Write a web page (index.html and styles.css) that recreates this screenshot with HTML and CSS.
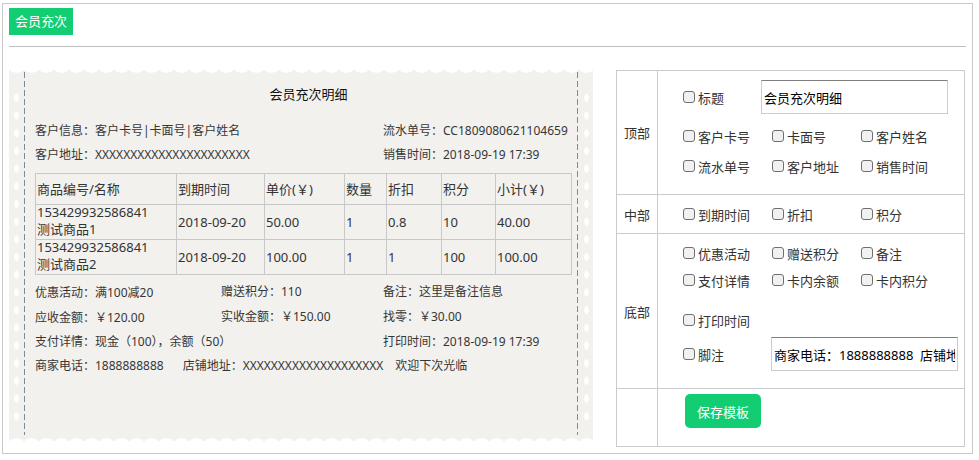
FILE: index.html
```html
<!DOCTYPE html>
<html lang="zh-CN">
<head>
<meta charset="utf-8">
<title>会员充次</title>
<link rel="stylesheet" href="styles.css">
</head>
<body>
<div class="page">
  <div class="tabs"><span class="tab">会员充次</span></div>
  <div class="divider"></div>
  <div class="main">
    <div class="receipt">
      <div class="strip strip-left"><div class="holes"></div></div>
      <div class="paper">
        <div class="r-title">会员充次明细</div>
        <div class="r-head">
          <div class="r-col">
            <div>客户信息：客户卡号|卡面号|客户姓名</div>
            <div>客户地址：XXXXXXXXXXXXXXXXXXXXXX</div>
          </div>
          <div class="r-col">
            <div>流水单号：CC1809080621104659</div>
            <div>销售时间：2018-09-19 17:39</div>
          </div>
        </div>
        <div class="r-table">
          <div class="cell">商品编号/名称</div>
          <div class="cell">到期时间</div>
          <div class="cell">单价(￥)</div>
          <div class="cell">数量</div>
          <div class="cell">折扣</div>
          <div class="cell">积分</div>
          <div class="cell">小计(￥)</div>

          <div class="cell cell-2l"><span>153429932586841</span><span>测试商品1</span></div>
          <div class="cell">2018-09-20</div>
          <div class="cell">50.00</div>
          <div class="cell">1</div>
          <div class="cell">0.8</div>
          <div class="cell">10</div>
          <div class="cell">40.00</div>

          <div class="cell cell-2l"><span>153429932586841</span><span>测试商品2</span></div>
          <div class="cell">2018-09-20</div>
          <div class="cell">100.00</div>
          <div class="cell">1</div>
          <div class="cell">1</div>
          <div class="cell">100</div>
          <div class="cell">100.00</div>
        </div>
        <div class="r-foot">
          <div class="low">优惠活动：满100减20</div>
          <div>赠送积分：110</div>
          <div>备注：这里是备注信息</div>
          <div class="low">应收金额：￥120.00</div>
          <div>实收金额：￥150.00</div>
          <div>找零：￥30.00</div>
          <div>支付详情：现金（100），余额（50）</div>
          <div></div>
          <div>打印时间：2018-09-19 17:39</div>
        </div>
        <div class="r-last">
          <span>商家电话：1888888888</span><span class="gap-l">店铺地址：XXXXXXXXXXXXXXXXXXXX</span><span class="gap-s">欢迎下次光临</span>
        </div>
      </div>
      <div class="strip strip-right"><div class="holes"></div></div>
    </div>

    <div class="config">
      <div class="c-label">顶部</div>
      <div class="c-body c-top">
        <div class="c-line">
          <label class="chk chk-title"><input type="checkbox"><span>标题</span></label>
          <input class="c-input" type="text" value="会员充次明细">
        </div>
        <div class="c-grid">
          <label class="chk"><input type="checkbox"><span>客户卡号</span></label>
          <label class="chk"><input type="checkbox"><span>卡面号</span></label>
          <label class="chk"><input type="checkbox"><span>客户姓名</span></label>
          <label class="chk"><input type="checkbox"><span>流水单号</span></label>
          <label class="chk"><input type="checkbox"><span>客户地址</span></label>
          <label class="chk"><input type="checkbox"><span>销售时间</span></label>
        </div>
      </div>

      <div class="c-label">中部</div>
      <div class="c-body c-mid">
        <div class="c-grid">
          <label class="chk"><input type="checkbox"><span>到期时间</span></label>
          <label class="chk"><input type="checkbox"><span>折扣</span></label>
          <label class="chk"><input type="checkbox"><span>积分</span></label>
        </div>
      </div>

      <div class="c-label">底部</div>
      <div class="c-body c-bottom">
        <div class="c-grid">
          <label class="chk"><input type="checkbox"><span>优惠活动</span></label>
          <label class="chk"><input type="checkbox"><span>赠送积分</span></label>
          <label class="chk"><input type="checkbox"><span>备注</span></label>
          <label class="chk"><input type="checkbox"><span>支付详情</span></label>
          <label class="chk"><input type="checkbox"><span>卡内余额</span></label>
          <label class="chk"><input type="checkbox"><span>卡内积分</span></label>
        </div>
        <div class="c-grid c-print">
          <label class="chk"><input type="checkbox"><span>打印时间</span></label>
        </div>
        <div class="c-line c-foot">
          <label class="chk chk-foot"><input type="checkbox"><span>脚注</span></label>
          <input class="c-input" type="text" value="商家电话：1888888888  店铺地址：XXXXXXXXXXXXXXXXXXXX  欢迎下次光临">
        </div>
      </div>

      <div class="c-label"></div>
      <div class="c-body c-actions">
        <button class="btn-save" type="button">保存模板</button>
      </div>
    </div>
  </div>
</div>
</body>
</html>
```

FILE: styles.css
```css
* { box-sizing: border-box; }

body {
  margin: 0;
  background: #fff;
  color: #333;
  font-family: "Noto Sans", "Noto Sans CJK SC", sans-serif;
}

.page {
  width: 971px;
  height: 451px;
  margin: 3px 0 0 2px;
  padding: 4px 6px 0;
  border: 1px solid #c9c9c9;
}

.tabs { display: flex; }

.tab {
  height: 27px;
  padding: 0 6px;
  background: #13cd73;
  color: #fff;
  font-size: 13px;
  line-height: 27px;
}

.divider {
  margin-top: 11px;
  border-top: 1px solid #bfbfbf;
}

.main {
  display: flex;
  align-items: flex-start;
  gap: 23px;
  margin-top: 23px;
}

/* ---------- receipt ---------- */
.receipt {
  position: relative;
  display: flex;
  width: 584px;
  height: 371px;
  background: #f2f1ee;
}

.receipt::before,
.receipt::after {
  content: "";
  position: absolute;
  left: 0;
  right: 0;
  height: 4px;
  background-size: 15px 4px;
  background-repeat: repeat-x;
}

.receipt::before {
  top: 0;
  background-image: radial-gradient(7px 3px at 50% 0, #fff 80%, rgba(255,255,255,0) 100%);
}

.receipt::after {
  bottom: 0;
  background-image: radial-gradient(7px 3px at 50% 100%, #fff 80%, rgba(255,255,255,0) 100%);
}

.strip {
  flex: none;
  width: 15px;
  padding-top: 19px;
}

.holes {
  height: 337px;
  background-size: 15px 17.7px;
  background-repeat: repeat-y;
}

.strip-left .holes {
  background-image: radial-gradient(2.6px 4.6px at 7.5px 50%, #fff 75%, rgba(255,255,255,0) 100%);
}

.strip-right .holes {
  background-image: radial-gradient(2.6px 4.6px at 8.5px 50%, #fff 75%, rgba(255,255,255,0) 100%);
}

.paper {
  flex: 1;
  padding: 12px 6px 0 11px;
  background-image:
    repeating-linear-gradient(to bottom, #7d8a99 0 6px, rgba(0,0,0,0) 6px 9px),
    repeating-linear-gradient(to bottom, #7d8a99 0 6px, rgba(0,0,0,0) 6px 9px);
  background-size: 1px 363px, 1px 363px;
  background-position: 0 2px, 100% 2px;
  background-repeat: no-repeat;
  font-size: 12px;
  line-height: 24px;
  color: #363636;
  white-space: nowrap;
}

.r-title {
  padding-left: 10px;
  text-align: center;
  font-size: 13px;
  color: #111;
}

.r-head {
  display: grid;
  grid-template-columns: 348px 189px;
  margin-top: 13px;
}

.r-table {
  display: grid;
  grid-template-columns: 141px 88px 80px 42px 55px 54px 76px;
  grid-template-rows: 31px 35px 35px;
  width: 537px;
  margin-top: 6px;
  border-top: 1px solid #c8c8c8;
  border-left: 1px solid #c8c8c8;
  font-size: 13px;
  line-height: 17px;
  color: #333;
}

.cell {
  display: flex;
  align-items: center;
  padding-left: 1px;
  border-right: 1px solid #c8c8c8;
  border-bottom: 1px solid #c8c8c8;
}

.cell-2l {
  flex-direction: column;
  align-items: flex-start;
  justify-content: center;
  padding-bottom: 2px;
}

.r-foot {
  display: grid;
  grid-template-columns: 186px 162px 189px;
  margin-top: 5px;
}

.r-foot .low { padding-top: 1px; }

.gap-l { margin-left: 19px; }
.gap-s { margin-left: 12px; }

/* ---------- config panel ---------- */
.config {
  display: grid;
  grid-template-columns: 41px 307px;
  grid-template-rows: 124px 39px 155px 58px;
  width: 349px;
  border-top: 1px solid #cbcbcb;
  border-left: 1px solid #cbcbcb;
  font-size: 13px;
  color: #333;
}

.c-label,
.c-body {
  border-right: 1px solid #cbcbcb;
  border-bottom: 1px solid #cbcbcb;
}

.c-label {
  display: flex;
  align-items: center;
  justify-content: center;
}

.c-body { padding-left: 25px; }

.c-top { padding-top: 9px; }

.c-line {
  display: flex;
  align-items: center;
  height: 34px;
}

.chk-title { width: 78px; }
.chk-foot { width: 88px; }

.c-input {
  width: 187px;
  height: 34px;
  margin: 0;
  padding: 0 2px;
  border: 1px solid #cccccc;
  border-top-color: #7f7f7f;
  background: #fff;
  color: #000;
  font: 13px "Noto Sans", "Noto Sans CJK SC", sans-serif;
  outline: none;
}

.c-grid {
  display: grid;
  grid-template-columns: repeat(3, 89px);
  grid-auto-rows: 20px;
  row-gap: 10px;
}

.c-top .c-grid { margin-top: 12px; }

.c-mid {
  display: flex;
  align-items: center;
}

.c-bottom { padding-top: 9px; }
.c-bottom .c-grid { row-gap: 7px; }
.c-bottom .c-print { margin-top: 20px; }
.c-foot { margin-top: 7px; }

.chk {
  display: flex;
  align-items: center;
  height: 20px;
  white-space: nowrap;
}

.chk input {
  appearance: none;
  -webkit-appearance: none;
  flex: none;
  width: 12px;
  height: 12px;
  margin: 0 3px 0 0;
  border: 1px solid #6f6f6f;
  border-radius: 3px;
  background: #f1f1f1;
}

.c-actions { padding: 5px 0 0 27px; }

.btn-save {
  width: 76px;
  height: 34px;
  padding: 0;
  border: 0;
  border-radius: 5px;
  background: #13cd73;
  color: #fff;
  font: 13px "Noto Sans", "Noto Sans CJK SC", sans-serif;
}
```
